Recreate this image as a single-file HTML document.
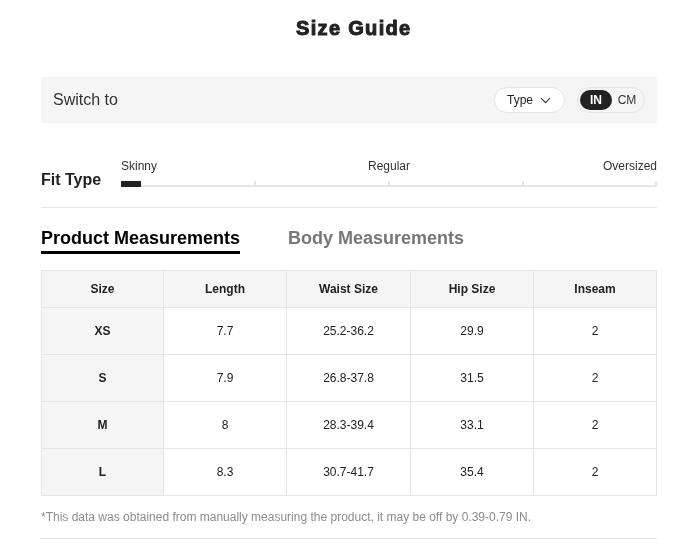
<!DOCTYPE html>
<html><head><meta charset="utf-8">
<style>
*{box-sizing:border-box;margin:0;padding:0}
html,body{width:690px;height:553px;overflow:hidden;background:#fff}
body{font-family:"Liberation Sans",sans-serif;color:#222;position:relative;filter:grayscale(1)}
.abs{position:absolute}
.title{left:296px;top:16px;font-size:20px;font-weight:bold;color:#222;line-height:25px;letter-spacing:1.33px;-webkit-text-stroke:1px #222;white-space:nowrap}
.switch{left:41px;top:77px;width:616px;height:46px;background:#f5f5f5}
.switch .lbl{position:absolute;left:12px;top:14px;font-size:16px;line-height:18px;color:#333}
.type{position:absolute;left:453px;top:10px;width:71px;height:26px;border:1px solid #e5e5e5;border-radius:13px;background:#fff;font-size:12px;line-height:24px;color:#222}
.type span{position:absolute;left:12px;top:0}
.type svg{position:absolute;left:45px;top:9px}
.unit{position:absolute;left:536px;top:10px;width:68px;height:26px;border:1px solid #e5e5e5;border-radius:13px;background:#f5f5f5}
.unit .in{position:absolute;left:2px;top:2px;width:32px;height:20px;border-radius:10px;background:#222;color:#fff;font-size:12px;font-weight:bold;line-height:20px;text-align:center}
.unit .cm{position:absolute;left:36px;top:2px;width:26px;height:20px;font-size:12px;line-height:20px;color:#333;text-align:center}
.fit{left:41px;top:171px;font-size:16px;font-weight:bold;line-height:18px;color:#222}
.slab{top:159px;font-size:12px;line-height:14px;color:#333}
.track{left:121px;top:185px;width:536px;height:2px;background:#e5e5e5}
.knob{left:121px;top:181px;width:20px;height:6px;background:#222}
.tick{top:181px;width:2px;height:6px;background:#e5e5e5}
.hr{left:41px;width:616px;height:1px;background:#e5e5e5}
.tab1{left:41px;top:228px;font-size:18px;font-weight:bold;line-height:20px;color:#000}
.tabline{left:41px;top:251px;width:199px;height:3px;background:#000}
.tab2{left:288px;top:228px;font-size:18px;font-weight:bold;line-height:20px;color:#777}
table{position:absolute;left:41px;top:270px;width:615px;border-collapse:collapse;table-layout:fixed}
td{border:1px solid #e5e5e5;text-align:center;font-size:12px;color:#222;height:47px;padding:0}
tr.h td{height:37px;background:#f5f5f5;font-weight:bold}
td.s{background:#f5f5f5;font-weight:bold}
.note{left:41px;top:510px;font-size:12px;line-height:14px;color:#8c8c8c}
</style></head>
<body>
<div class="abs title">Size Guide</div>
<div class="abs switch">
  <div class="lbl">Switch to</div>
  <div class="type"><span>Type</span><svg width="11" height="7" viewBox="0 0 11 7"><path d="M1 1.2 L5.5 5.7 L10 1.2" fill="none" stroke="#333" stroke-width="1.1"/></svg></div>
  <div class="unit"><div class="in">IN</div><div class="cm">CM</div></div>
</div>
<div class="abs fit">Fit Type</div>
<div class="abs slab" style="left:121px">Skinny</div>
<div class="abs slab" style="left:368px">Regular</div>
<div class="abs slab" style="left:603px">Oversized</div>
<div class="abs track"></div>
<div class="abs tick" style="left:254px"></div>
<div class="abs tick" style="left:388px"></div>
<div class="abs tick" style="left:522px"></div>
<div class="abs tick" style="left:655px"></div>
<div class="abs knob"></div>
<div class="abs hr" style="top:207px"></div>
<div class="abs tab1">Product Measurements</div>
<div class="abs tabline"></div>
<div class="abs tab2">Body Measurements</div>
<table>
<colgroup><col style="width:122px"><col style="width:123px"><col style="width:124px"><col style="width:123px"><col style="width:123px"></colgroup>
<tr class="h"><td>Size</td><td>Length</td><td>Waist Size</td><td>Hip Size</td><td>Inseam</td></tr>
<tr><td class="s">XS</td><td>7.7</td><td>25.2-36.2</td><td>29.9</td><td>2</td></tr>
<tr><td class="s">S</td><td>7.9</td><td>26.8-37.8</td><td>31.5</td><td>2</td></tr>
<tr><td class="s">M</td><td>8</td><td>28.3-39.4</td><td>33.1</td><td>2</td></tr>
<tr><td class="s">L</td><td>8.3</td><td>30.7-41.7</td><td>35.4</td><td>2</td></tr>
</table>
<div class="abs note">*This data was obtained from manually measuring the product, it may be off by 0.39-0.79 IN.</div>
<div class="abs hr" style="top:538px"></div>
</body></html>
